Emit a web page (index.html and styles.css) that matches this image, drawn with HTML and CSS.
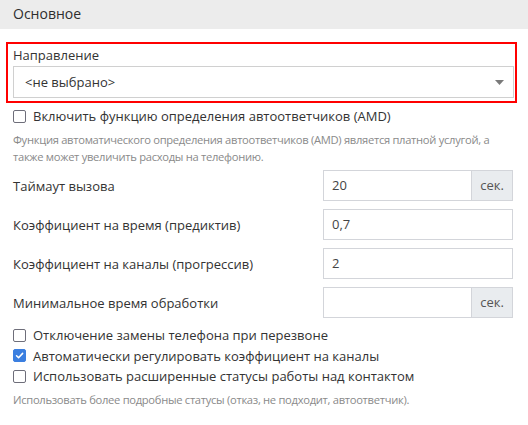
FILE: index.html
```html
<!DOCTYPE html>
<html lang="ru">
<head>
<meta charset="utf-8">
<link rel="stylesheet" href="styles.css">
</head>
<body>
<div class="header">Основное</div>
<div class="main">
  <div class="highlight">
    <div class="field-label">Направление</div>
    <div class="select">
      <span>&lt;не выбрано&gt;</span>
      <svg class="caret" width="9" height="5" viewBox="0 0 9 5"><path d="M0 0h9L4.5 5z" fill="#7a7a7a"/></svg>
    </div>
  </div>
  <div class="section">
    <label class="check first"><span class="box"></span>Включить функцию определения автоответчиков (AMD)</label>
    <p class="help">Функция автоматического определения автоответчиков (AMD) является платной услугой, а также может увеличить расходы на телефонию.</p>

    <div class="rows">
      <div class="row">
        <div class="row-label">Таймаут вызова</div>
        <div class="input-group"><div class="input">20</div><div class="addon">сек.</div></div>
      </div>
      <div class="row">
        <div class="row-label">Коэффициент на время (предиктив)</div>
        <div class="input-group"><div class="input">0,7</div></div>
      </div>
      <div class="row">
        <div class="row-label">Коэффициент на каналы (прогрессив)</div>
        <div class="input-group"><div class="input">2</div></div>
      </div>
      <div class="row">
        <div class="row-label">Минимальное время обработки</div>
        <div class="input-group"><div class="input"></div><div class="addon">сек.</div></div>
      </div>
    </div>

    <div class="checks">
      <label class="check"><span class="box"></span>Отключение замены телефона при перезвоне</label>
      <label class="check"><span class="box checked"><svg width="13" height="13" viewBox="0 0 13 13"><path d="M3 6.8l2.4 2.4L10.2 4" fill="none" stroke="#fff" stroke-width="1.8" stroke-linecap="round" stroke-linejoin="round"/></svg></span>Автоматически регулировать коэффициент на каналы</label>
      <label class="check"><span class="box"></span>Использовать расширенные статусы работы над контактом</label>
    </div>
    <p class="help last">Использовать более подробные статусы (отказ, не подходит, автоответчик).</p>
  </div>
</div>
</body>
</html>
```
FILE: styles.css
```css
* { box-sizing: border-box; }
body {
  margin: 0;
  background: #fff;
  font-family: "Open Sans", "Noto Sans", sans-serif;
  font-size: 13px;
  color: #3a3a3a;
}
.header {
  height: 29px;
  background: #ececec;
  padding-left: 13px;
  font-size: 14px;
  line-height: 28px;
  color: #2e2e2e;
}
.main {
  padding: 13px 11px 0 6px;
}
.highlight {
  border: 2px solid #ff0000;
  padding: 1px 1px 3px 5px;
}
.field-label {
  height: 21px;
  line-height: 20px;
  color: #333;
}
.select {
  height: 32px;
  border: 1px solid #d0d0d0;
  display: flex;
  align-items: center;
  justify-content: space-between;
  padding: 0 9px 0 11px;
  color: #333;
}
.caret { display: block; }
.section {
  padding: 0 4px 0 7px;
}
.check {
  display: flex;
  align-items: center;
  height: 20.5px;
  color: #333;
}
.check.first { margin-top: 3px; height: 20px; }
.box {
  width: 13px;
  height: 13px;
  border: 1.5px solid #6e6e7a;
  border-radius: 2px;
  margin-right: 7px;
  flex: none;
  display: flex;
  align-items: center;
  justify-content: center;
}
.box.checked {
  background: #3b7fe0;
  border-color: #3b7fe0;
}
.box.checked svg { display: block; }
.help {
  margin: 5px 0 0;
  font-size: 11.2px;
  letter-spacing: -0.3px;
  line-height: 17px;
  color: #8a8a8a;
}
.rows {
  margin-top: 5px;
  display: flex;
  flex-direction: column;
  gap: 8px;
}
.row {
  display: flex;
  align-items: center;
  justify-content: space-between;
}
.row-label { color: #333; }
.input-group {
  width: 190px;
  height: 31px;
  border: 1px solid #d3d5da;
  display: flex;
}
.input {
  flex: 1;
  padding-left: 8px;
  line-height: 29px;
  color: #444;
}
.addon {
  width: 41px;
  background: #e9ecef;
  border-left: 1px solid #d3d5da;
  line-height: 29px;
  text-align: center;
  color: #555;
}
.checks {
  margin-top: 7px;
}
.help.last { margin-top: 4px; }
```
